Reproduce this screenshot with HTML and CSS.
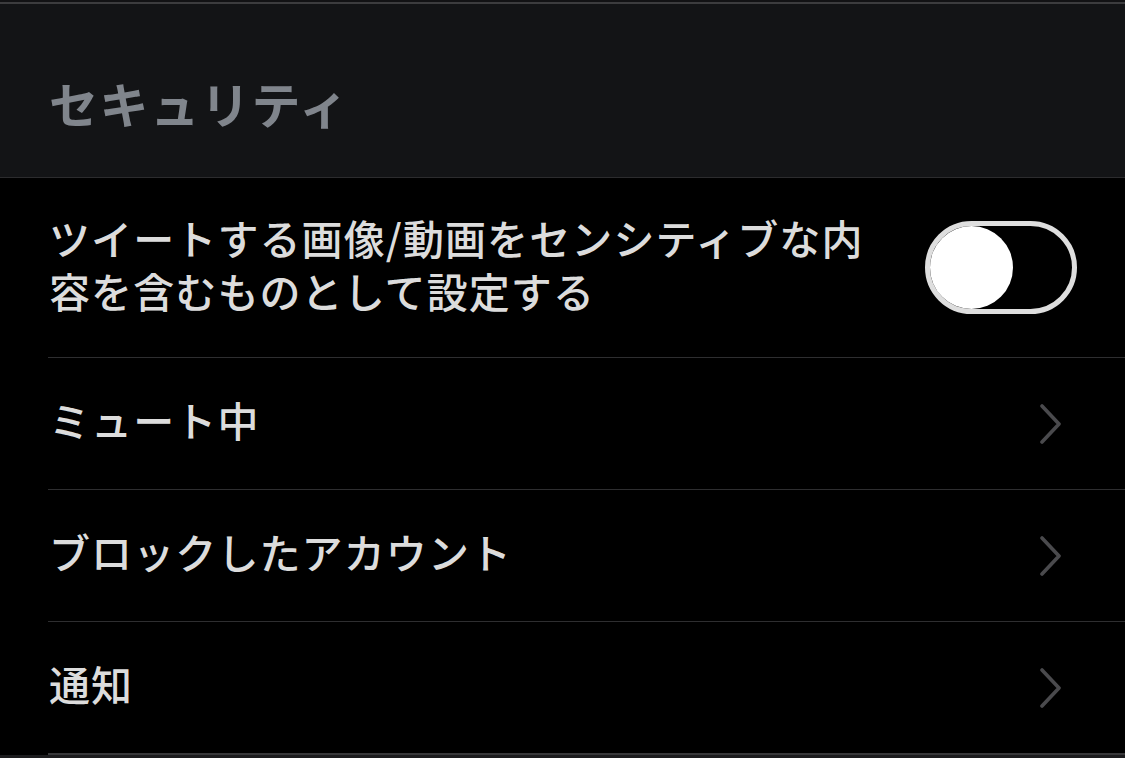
FILE: index.html
```html
<!DOCTYPE html>
<html lang="ja">
<head>
<meta charset="utf-8">
<link rel="stylesheet" href="styles.css">
</head>
<body>
<div class="screen">
  <div class="top-edge"></div>
  <header class="section-header">
    <h2 class="section-title">セキュリティ</h2>
  </header>
  <ul class="list">
    <li class="row row-toggle">
      <span class="row-label">ツイートする画像/動画をセンシティブな内<br>容を含むものとして設定する</span>
      <span class="toggle"><span class="thumb"></span></span>
    </li>
    <li class="row">
      <span class="row-label">ミュート中</span>
      <svg class="chev" width="24" height="40" viewBox="0 0 24 40"><path d="M3 2 L20 20 L3 38" fill="none" stroke="#4a4a4d" stroke-width="3.6" stroke-linecap="round" stroke-linejoin="round"/></svg>
    </li>
    <li class="row">
      <span class="row-label">ブロックしたアカウント</span>
      <svg class="chev" width="24" height="40" viewBox="0 0 24 40"><path d="M3 2 L20 20 L3 38" fill="none" stroke="#4a4a4d" stroke-width="3.6" stroke-linecap="round" stroke-linejoin="round"/></svg>
    </li>
    <li class="row">
      <span class="row-label">通知</span>
      <svg class="chev" width="24" height="40" viewBox="0 0 24 40"><path d="M3 2 L20 20 L3 38" fill="none" stroke="#4a4a4d" stroke-width="3.6" stroke-linecap="round" stroke-linejoin="round"/></svg>
    </li>
  </ul>
  <div class="bottom-fill"></div>
</div>
</body>
</html>
```
FILE: styles.css
```css
html, body {
  margin: 0;
  padding: 0;
  background: #000;
}
.screen {
  width: 1125px;
  height: 758px;
  overflow: hidden;
  display: flex;
  flex-direction: column;
  font-family: "Noto Sans CJK JP", "Noto Sans", sans-serif;
}
.top-edge {
  height: 2px;
  background: #121214;
  flex: none;
}
.section-header {
  height: 176px;
  box-sizing: border-box;
  background: #131416;
  border-top: 2px solid #3c3c3e;
  border-bottom: 1px solid #2c2c2e;
  display: flex;
  align-items: center;
  padding-left: 49px;
  padding-top: 24px;
  flex: none;
}
.section-title {
  margin: 0;
  font-size: 49px;
  font-weight: 700;
  color: #80858c;
  letter-spacing: 1.6px;
  line-height: 1;
}
.list {
  list-style: none;
  margin: 0;
  padding: 0 0 0 48px;
  background: #000;
  flex: none;
}
.row {
  height: 131px;
  display: flex;
  align-items: center;
  justify-content: space-between;
  border-bottom: 1px solid #2e2e30;
  padding-right: 62px;
}
.row:last-child {
  border-bottom: 2px solid #38383a;
}
.row-toggle {
  height: 179px;
  padding-right: 48px;
}
.row-label {
  color: #dcdcdc;
  font-size: 41px;
  font-weight: 500;
  line-height: 53px;
  padding-left: 1px;
  padding-bottom: 8px;
  letter-spacing: 1.1px;
}
.row-toggle .row-label {
  padding-bottom: 8px;
}
.toggle {
  box-sizing: border-box;
  width: 152px;
  height: 93px;
  border: 5px solid #dedede;
  border-radius: 47px;
  background: #000;
  display: flex;
  align-items: center;
}
.thumb {
  width: 83px;
  height: 83px;
  border-radius: 50%;
  background: #fff;
}
.chev {
  display: block;
}
.bottom-fill {
  flex: 1;
  background: #1c1c1e;
}
```
